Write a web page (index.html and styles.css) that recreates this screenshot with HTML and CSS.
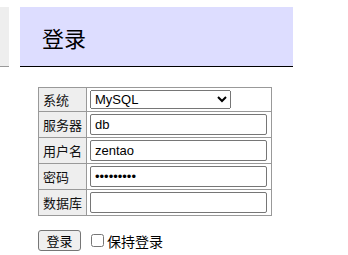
FILE: index.html
```html
<!DOCTYPE html>
<html lang="zh-CN">
<head>
    <meta charset="UTF-8">
    <meta name="viewport" content="width=device-width, initial-scale=1.0">
    <title>登录 - Adminer</title>
    <link rel="stylesheet" href="styles.css">
</head>
<body>
    <div class="page">
        <div class="menu"></div>
        <div class="content">
            <h2 class="title">登录</h2>
            <form class="login" action="" method="post">
                <table class="fields">
                    <tr>
                        <th>系统</th>
                        <td>
                            <select name="auth[driver]" class="driver">
                                <option selected>MySQL</option>
                                <option>SQLite 3</option>
                                <option>PostgreSQL</option>
                            </select>
                        </td>
                    </tr>
                    <tr>
                        <th>服务器</th>
                        <td><input type="text" name="auth[server]" value="db"></td>
                    </tr>
                    <tr>
                        <th>用户名</th>
                        <td><input type="text" name="auth[username]" value="zentao"></td>
                    </tr>
                    <tr>
                        <th>密码</th>
                        <td><input type="password" name="auth[password]" value="123456789"></td>
                    </tr>
                    <tr>
                        <th>数据库</th>
                        <td><input type="text" name="auth[db]" value=""></td>
                    </tr>
                </table>
                <div class="actions">
                    <button type="submit" class="submit">登录</button>
                    <label class="remember"><input type="checkbox" name="auth[permanent]">保持登录</label>
                </div>
            </form>
        </div>
    </div>
</body>
</html>
```

FILE: styles.css
```css
body {
    margin: 0;
    padding: 0;
    background: #fff;
    color: #000;
    font-family: "Liberation Sans", "Noto Sans CJK SC", sans-serif;
}

.page {
    display: flex;
    align-items: flex-start;
}

.menu {
    width: 9px;
    height: 59px;
    margin-top: 7px;
    background: #eee;
    border-bottom: 1px solid #999;
}

.content {
    margin-left: 11px;
    margin-top: 7px;
}

.title {
    width: 251px;
    height: 59px;
    margin: 0;
    padding: 0 0 0 22px;
    display: flex;
    align-items: center;
    font-family: "Noto Sans CJK SC", sans-serif;
    font-size: 22px;
    font-weight: normal;
    background: #ddf;
    border-bottom: 1px solid #000;
}

.login {
    margin: 20px 0 0 18px;
}

.fields {
    border-collapse: collapse;
    border: 1px solid #999;
}

.fields th,
.fields td {
    border: 1px solid #999;
    padding: 2px 4px 2px 3px;
    line-height: 16px;
}

.fields th {
    background: #eee;
    text-align: left;
    font-family: "Noto Sans CJK SC", sans-serif;
    font-size: 13px;
    font-weight: normal;
    padding: 2px 4px;
    color: #111;
}

.fields td input {
    display: block;
    box-sizing: border-box;
    width: 177px;
    height: 21px;
    margin: 0;
    padding: 1px 4px;
    font-family: "Liberation Sans", sans-serif;
    font-size: 13px;
    color: #000;
    border: 1px solid #767676;
    border-radius: 2px;
}

.driver {
    display: block;
    box-sizing: border-box;
    width: 141px;
    height: 19px;
    margin: 0;
    font-family: "Liberation Sans", sans-serif;
    font-size: 13px;
    color: #000;
}

.actions {
    display: flex;
    align-items: center;
    margin-top: 14px;
}

.submit {
    box-sizing: border-box;
    width: 43px;
    height: 21px;
    padding: 0;
    font-family: "Noto Sans CJK SC", sans-serif;
    font-size: 13px;
    color: #000;
    background: #efefef;
    border: 1px solid #767676;
    border-radius: 3px;
}

.remember {
    display: flex;
    align-items: center;
    margin-left: 6px;
    font-family: "Noto Sans CJK SC", sans-serif;
    font-size: 14px;
}

.remember input {
    width: 13px;
    height: 13px;
    margin: 0 3px 0 4px;
}
```
